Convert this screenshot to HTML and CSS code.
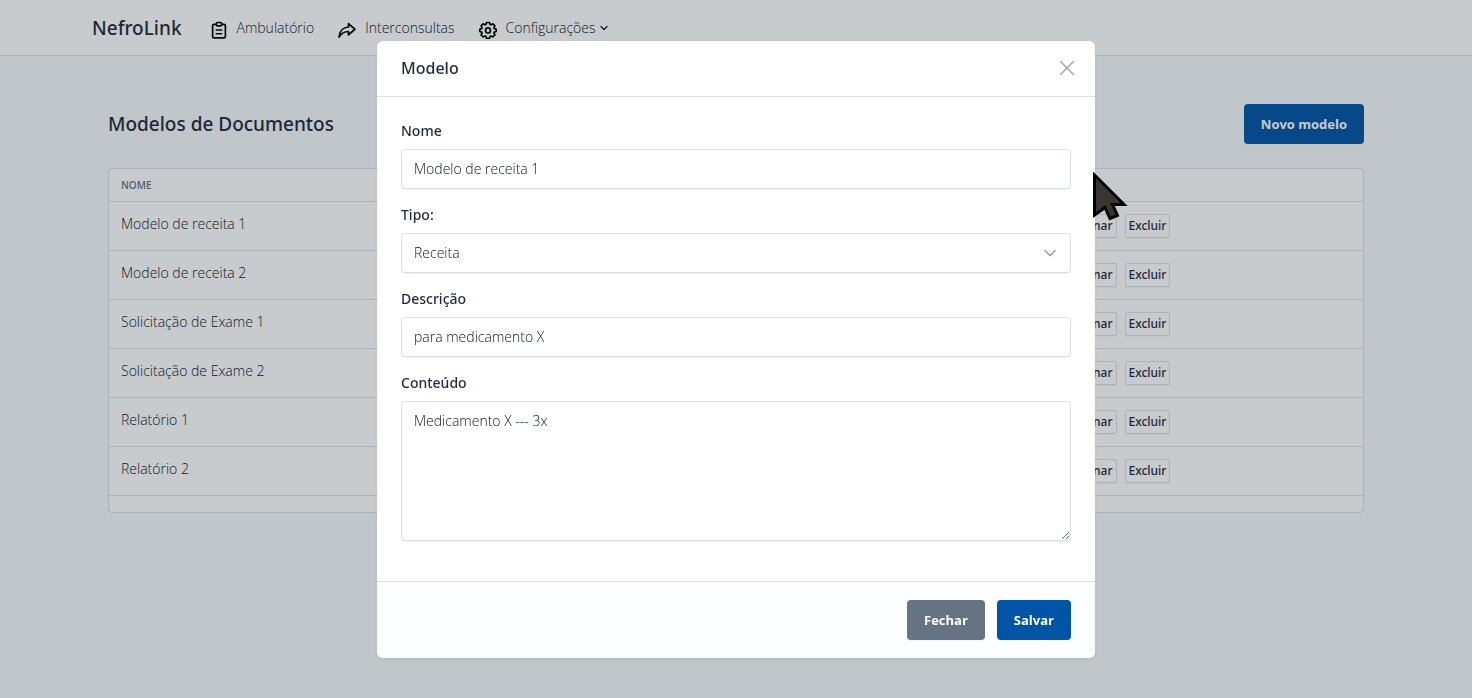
FILE: index.html
```html
<!DOCTYPE html>
<html lang="pt-BR">
<head>
<meta charset="utf-8">
<title>NefroLink</title>
<link rel="stylesheet" href="styles.css">
</head>
<body>
<header class="topbar">
  <nav class="topbar-inner">
    <a class="brand" href="#">NefroLink</a>
    <a class="nav-item" href="#">
      <svg class="icon" viewBox="0 0 24 24"><path d="M8 4.500H5.500a2 2 0 0 0-2 2V20.500a2 2 0 0 0 2 2h13a2 2 0 0 0 2-2V6.500a2 2 0 0 0-2-2H16"/><rect x="8.500" y="2" width="7" height="4.500" rx="1.500"/><path d="M8.500 12h7M8.500 17h7"/></svg>
      <span>Ambulatório</span>
    </a>
    <a class="nav-item" href="#">
      <svg class="icon" viewBox="0 0 24 24"><path d="M14 3.500l8.500 7.500-8.500 7.500v-4.500C8 14 4 17 1.500 21.500 2 14 6.500 8.500 14 8z"/></svg>
      <span>Interconsultas</span>
    </a>
    <a class="nav-item" href="#">
      <svg class="icon" viewBox="0 0 24 24"><path d="M10 2h4l.8 2.600 1.200.5 2.500-1.300 2.700 2.700-1.300 2.500.5 1.200L23 11v3l-2.600.8-.5 1.200 1.300 2.500-2.700 2.700-2.500-1.300-1.200.5L14 23h-4l-.8-2.600-1.200-.5-2.500 1.300-2.700-2.700L4.100 16l-.5-1.200L1 14v-3l2.600-.8.5-1.200-1.300-2.500 2.700-2.700L8 5.100l1.200-.5z"/><circle cx="12" cy="12.500" r="3.300"/></svg>
      <span>Configurações</span>
      <svg class="caret" viewBox="0 0 8 8"><path d="M1 2.500l3 3 3-3"/></svg>
    </a>
  </nav>
</header>

<main class="page">
  <div class="page-head">
    <h1 class="page-title">Modelos de Documentos</h1>
    <button class="btn btn-primary" type="button">Novo modelo</button>
  </div>
  <div class="card">
    <table class="table">
      <thead><tr><th class="col-name">Nome</th><th></th></tr></thead>
      <tbody>
        <tr><td>Modelo de receita 1</td><td><div class="actions"><button class="btn-sm" type="button">Selecionar</button><button class="btn-sm" type="button">Excluir</button></div></td></tr>
        <tr><td>Modelo de receita 2</td><td><div class="actions"><button class="btn-sm" type="button">Selecionar</button><button class="btn-sm" type="button">Excluir</button></div></td></tr>
        <tr><td>Solicitação de Exame 1</td><td><div class="actions"><button class="btn-sm" type="button">Selecionar</button><button class="btn-sm" type="button">Excluir</button></div></td></tr>
        <tr><td>Solicitação de Exame 2</td><td><div class="actions"><button class="btn-sm" type="button">Selecionar</button><button class="btn-sm" type="button">Excluir</button></div></td></tr>
        <tr><td>Relatório 1</td><td><div class="actions"><button class="btn-sm" type="button">Selecionar</button><button class="btn-sm" type="button">Excluir</button></div></td></tr>
        <tr><td>Relatório 2</td><td><div class="actions"><button class="btn-sm" type="button">Selecionar</button><button class="btn-sm" type="button">Excluir</button></div></td></tr>
      </tbody>
    </table>
  </div>
</main>

<div class="backdrop">
  <form class="modal" role="dialog" aria-labelledby="modal-title">
    <div class="modal-header">
      <h2 class="modal-title" id="modal-title">Modelo</h2>
      <button class="close" type="button" aria-label="Fechar janela"><svg viewBox="0 0 16 16"><path d="M1.500 1.500l13 13M14.500 1.500l-13 13"/></svg></button>
    </div>
    <div class="modal-body">
      <div class="field">
        <label for="nome">Nome</label>
        <input class="control" id="nome" type="text" value="Modelo de receita 1">
      </div>
      <div class="field">
        <label for="tipo">Tipo:</label>
        <div class="select-wrap">
          <select class="control" id="tipo"><option>Receita</option></select>
          <svg class="select-arrow" viewBox="0 0 16 16"><path d="M3 5.500l5 5 5-5"/></svg>
        </div>
      </div>
      <div class="field">
        <label for="descricao">Descrição</label>
        <input class="control" id="descricao" type="text" value="para medicamento X">
      </div>
      <div class="field">
        <label for="conteudo">Conteúdo</label>
        <textarea class="control" id="conteudo" rows="6">Medicamento X --- 3x</textarea>
      </div>
    </div>
    <div class="modal-footer">
      <button class="btn btn-secondary" type="button">Fechar</button>
      <button class="btn btn-primary" type="button">Salvar</button>
    </div>
  </form>
</div>

<svg class="pointer" viewBox="0 0 36 52"><path d="M1.500 3L31 32.500H19.500L24.500 43.500l-7.500 3L12 35.500 1.500 43z"/></svg>
</body>
</html>
```
FILE: styles.css
```css
* { box-sizing: border-box; }
body {
  margin: 0;
  min-height: 100vh;
  background: #f5f9fa;
  color: #0b1526;
  font: 300 14px/20px "Open Sans", "Noto Sans", sans-serif;
}
button, input, select, textarea { font: inherit; color: inherit; }
svg { fill: none; stroke: currentColor; stroke-linecap: round; stroke-linejoin: round; }

.topbar { background: #fff; border-bottom: 1px solid #dadfe5; }
.topbar-inner {
  display: flex;
  align-items: center;
  max-width: 1320px;
  height: 55px;
  margin: 0 auto;
  padding: 0 16px;
  gap: 24px;
}
.brand, .page-title, .modal-title, .field label, .btn-sm {
  color: #1e293b;
  font-family: "Noto Sans", sans-serif;
  font-weight: 500;
}
.brand { margin-right: 4px; font-size: 19px; line-height: 28px; text-decoration: none; }
.nav-item { display: flex; align-items: center; gap: 9px; color: inherit; text-decoration: none; }
.icon { width: 18px; height: 18px; margin-top: 4px; color: #000; stroke-width: 2.300; }
.caret { width: 8px; height: 8px; margin-left: -5px; stroke-width: 1.200; }

.page { max-width: 1320px; margin: 0 auto; padding: 48px 32px; }
.page-head { display: flex; align-items: center; justify-content: space-between; margin-bottom: 24px; }
.page-title { margin: 0; font-size: 19px; line-height: 28px; }

.btn {
  height: 40px;
  padding: 0 16px;
  border: 1px solid transparent;
  border-radius: 4px;
  color: #fff;
  font-size: 13px;
  font-weight: 700;
  box-shadow: 0 1px 0 rgba(30, 41, 59, .04);
}
.btn-primary { background: #0054a6; }
.btn-secondary { background: #667382; }

.card { padding-bottom: 16px; background: #fff; border: 1px solid #dadfe5; border-radius: 4px; }
.table { width: 100%; border-collapse: separate; border-spacing: 0; table-layout: fixed; }
.table th {
  height: 33px;
  padding: 8px 12px;
  border-bottom: 1px solid #dadfe5;
  color: #667382;
  font-size: 10px;
  font-weight: 600;
  line-height: 16px;
  text-align: left;
  text-transform: uppercase;
}
.table .col-name { width: 74%; }
.table td { height: 49px; padding: 12px; border-bottom: 1px solid #dadfe5; vertical-align: top; }
.actions { display: flex; gap: 8px; }
.btn-sm {
  height: 24px;
  padding: 0 3px;
  border: 1px solid #dadfe5;
  border-radius: 2px;
  background: #fff;
  font-size: 12px;
  line-height: 20px;
  box-shadow: 0 1px 0 rgba(30, 41, 59, .04);
}

.backdrop {
  position: fixed;
  inset: 0;
  display: flex;
  align-items: center;
  justify-content: center;
  background: rgba(24, 36, 46, .24);
}
.modal {
  width: 100%;
  max-width: 718px;
  border-radius: 6px;
  background: #fff;
  box-shadow: 0 2px 4px rgba(24, 36, 51, .06);
}
.modal-header {
  display: flex;
  align-items: center;
  justify-content: space-between;
  height: 56px;
  padding: 0 20px 0 24px;
  border-bottom: 1px solid #dadfe5;
}
.modal-title { margin: 0; font-size: 16px; line-height: 24px; }
.close { display: flex; padding: 0; border: 0; background: none; color: #a5a8ad; }
.close svg { width: 16px; height: 16px; stroke-width: 1.500; }
.modal-body { padding: 24px 24px 40px; }
.field + .field { margin-top: 16px; }
.field label { display: block; margin-bottom: 8px; }
.control {
  display: block;
  width: 100%;
  height: 40px;
  padding: 9px 12px;
  border: 1px solid #dadfe5;
  border-radius: 4px;
  background: #fff;
  box-shadow: 0 1px 1px rgba(30, 41, 59, .06);
  appearance: none;
}
textarea.control { height: 140px; resize: vertical; }
.select-wrap { position: relative; }
.select-arrow { position: absolute; top: 12px; right: 13px; width: 16px; height: 16px; color: #929dab; stroke-width: 1.500; pointer-events: none; }
.modal-footer {
  display: flex;
  justify-content: flex-end;
  gap: 12px;
  padding: 18px 24px;
  border-top: 1px solid #dadfe5;
  border-radius: 0 0 6px 6px;
  background: #fcfdfe;
}

.pointer {
  position: fixed;
  top: 172px;
  left: 1093px;
  width: 36px;
  height: 52px;
  color: #000;
  fill: #3b3532;
  stroke-width: 3;
  stroke-linejoin: miter;
  stroke-linecap: butt;
  pointer-events: none;
}
```
